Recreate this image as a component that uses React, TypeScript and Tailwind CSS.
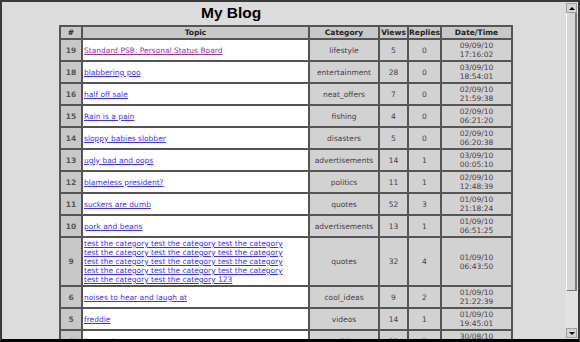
import React from "react"

type Row = {
  id: number
  topic: React.ReactNode
  category: string
  views: number
  replies: number
  date: string
  time: string
  visited?: boolean
  tall?: boolean
}

const T = "test the category"

const ROWS: Row[] = [
  { id: 19, topic: "Standard PSB: Personal Status Board", category: "lifestyle", views: 5, replies: 0, date: "09/09/10", time: "17:16:02", visited: true },
  { id: 18, topic: "blabbering poo", category: "entertainment", views: 28, replies: 0, date: "03/09/10", time: "18:54:01" },
  { id: 16, topic: "half off sale", category: "neat_offers", views: 7, replies: 0, date: "02/09/10", time: "21:59:38" },
  { id: 15, topic: "Rain is a pain", category: "fishing", views: 4, replies: 0, date: "02/09/10", time: "06:21:20" },
  { id: 14, topic: "sloppy babies slobber", category: "disasters", views: 5, replies: 0, date: "02/09/10", time: "06:20:38" },
  { id: 13, topic: "ugly bad and oops", category: "advertisements", views: 14, replies: 1, date: "03/09/10", time: "00:05:10" },
  { id: 12, topic: "blameless president?", category: "politics", views: 11, replies: 1, date: "02/09/10", time: "12:48:39" },
  { id: 11, topic: "suckers are dumb", category: "quotes", views: 52, replies: 3, date: "01/09/10", time: "21:18:24" },
  { id: 10, topic: "pork and beans", category: "advertisements", views: 13, replies: 1, date: "01/09/10", time: "06:51:25" },
  {
    id: 9,
    topic: (
      <>
        {`${T} ${T} ${T}`}
        <br />
        {`${T} ${T} ${T}`}
        <br />
        {`${T} ${T} ${T}`}
        <br />
        {`${T} ${T} ${T}`}
        <br />
        {`${T} ${T} 123`}
      </>
    ),
    category: "quotes",
    views: 32,
    replies: 4,
    date: "01/09/10",
    time: "06:43:50",
    tall: true,
  },
  { id: 6, topic: "noises to hear and laugh at", category: "cool_ideas", views: 9, replies: 2, date: "01/09/10", time: "21:22:39" },
  { id: 5, topic: "freddie", category: "videos", views: 14, replies: 1, date: "01/09/10", time: "19:45:01" },
  { id: 4, topic: "happy days", category: "politics", views: 22, replies: 2, date: "30/08/10", time: "18:10:44" },
]

const cell = "border-2 border-[#555555] text-center align-middle"

export default function App() {
  return (
    <div className="flex h-[342px] w-[580px] overflow-hidden border-2 border-b-[3px] border-[#3a3a3a] border-b-black bg-[#dcdcdc] font-['DejaVu_Sans',sans-serif] text-[7.5px] leading-[9px] text-[#4a3a4a]">
      <div className="min-w-0 flex-1 overflow-hidden">
        <h1 className="ml-[199px] h-[21px] font-['Liberation_Sans',sans-serif] text-[15.5px] font-bold leading-[21px] text-black">
          My Blog
        </h1>
        <table className="ml-[57px] mt-[2px] w-[452px] table-fixed border-collapse">
          <colgroup>
            <col className="w-[22px]" />
            <col className="w-[227px]" />
            <col className="w-[70px]" />
            <col className="w-[29px]" />
            <col className="w-[33px]" />
            <col className="w-[71px]" />
          </colgroup>
          <thead>
            <tr className="h-[13px] bg-[#c8c8c8] text-[#222222]">
              <th className={`${cell} font-bold`}>#</th>
              <th className={`${cell} font-bold`}>Topic</th>
              <th className={`${cell} font-bold`}>Category</th>
              <th className={`${cell} font-bold`}>Views</th>
              <th className={`${cell} font-bold`}>Replies</th>
              <th className={`${cell} font-bold`}>Date/Time</th>
            </tr>
          </thead>
          <tbody>
            {ROWS.map((row) => (
              <tr key={row.id} className={row.tall ? "h-[49px]" : "h-[22px]"}>
                <td className={`${cell} bg-[#c8c8c8] font-bold text-[#555555]`}>{row.id}</td>
                <td className={`${cell} bg-white pl-[1px] text-left`}>
                  <a
                    href="#"
                    className={`underline ${row.visited ? "text-[#993399]" : "text-[#3b2fff]"}`}
                  >
                    {row.topic}
                  </a>
                </td>
                <td className={`${cell} bg-[#d2d2d2]`}>{row.category}</td>
                <td className={`${cell} bg-[#d2d2d2]`}>{row.views}</td>
                <td className={`${cell} bg-[#d2d2d2]`}>{row.replies}</td>
                <td className={`${cell} bg-[#d2d2d2]`}>
                  {row.date}
                  <br />
                  {row.time}
                </td>
              </tr>
            ))}
          </tbody>
        </table>
      </div>
      <div className="flex w-[12px] flex-col bg-[#e2e2e2] py-[1px] pr-[1px]">
        <div className="flex h-[10px] items-center justify-center border border-[#a0a0a0] bg-[#d4d4d4]">
          <div className="h-0 w-0 border-x-[3px] border-b-[3px] border-x-transparent border-b-black" />
        </div>
        <div className="h-[278px] border-l border-l-white border-r-2 border-r-[#7a7a7a] border-b border-b-[#7a7a7a] bg-[#d6d6d6]" />
        <div className="flex-1" />
        <div className="flex h-[10px] items-center justify-center border border-[#a0a0a0] bg-[#d4d4d4]">
          <div className="h-0 w-0 border-x-[3px] border-t-[3px] border-x-transparent border-t-black" />
        </div>
      </div>
    </div>
  )
}
